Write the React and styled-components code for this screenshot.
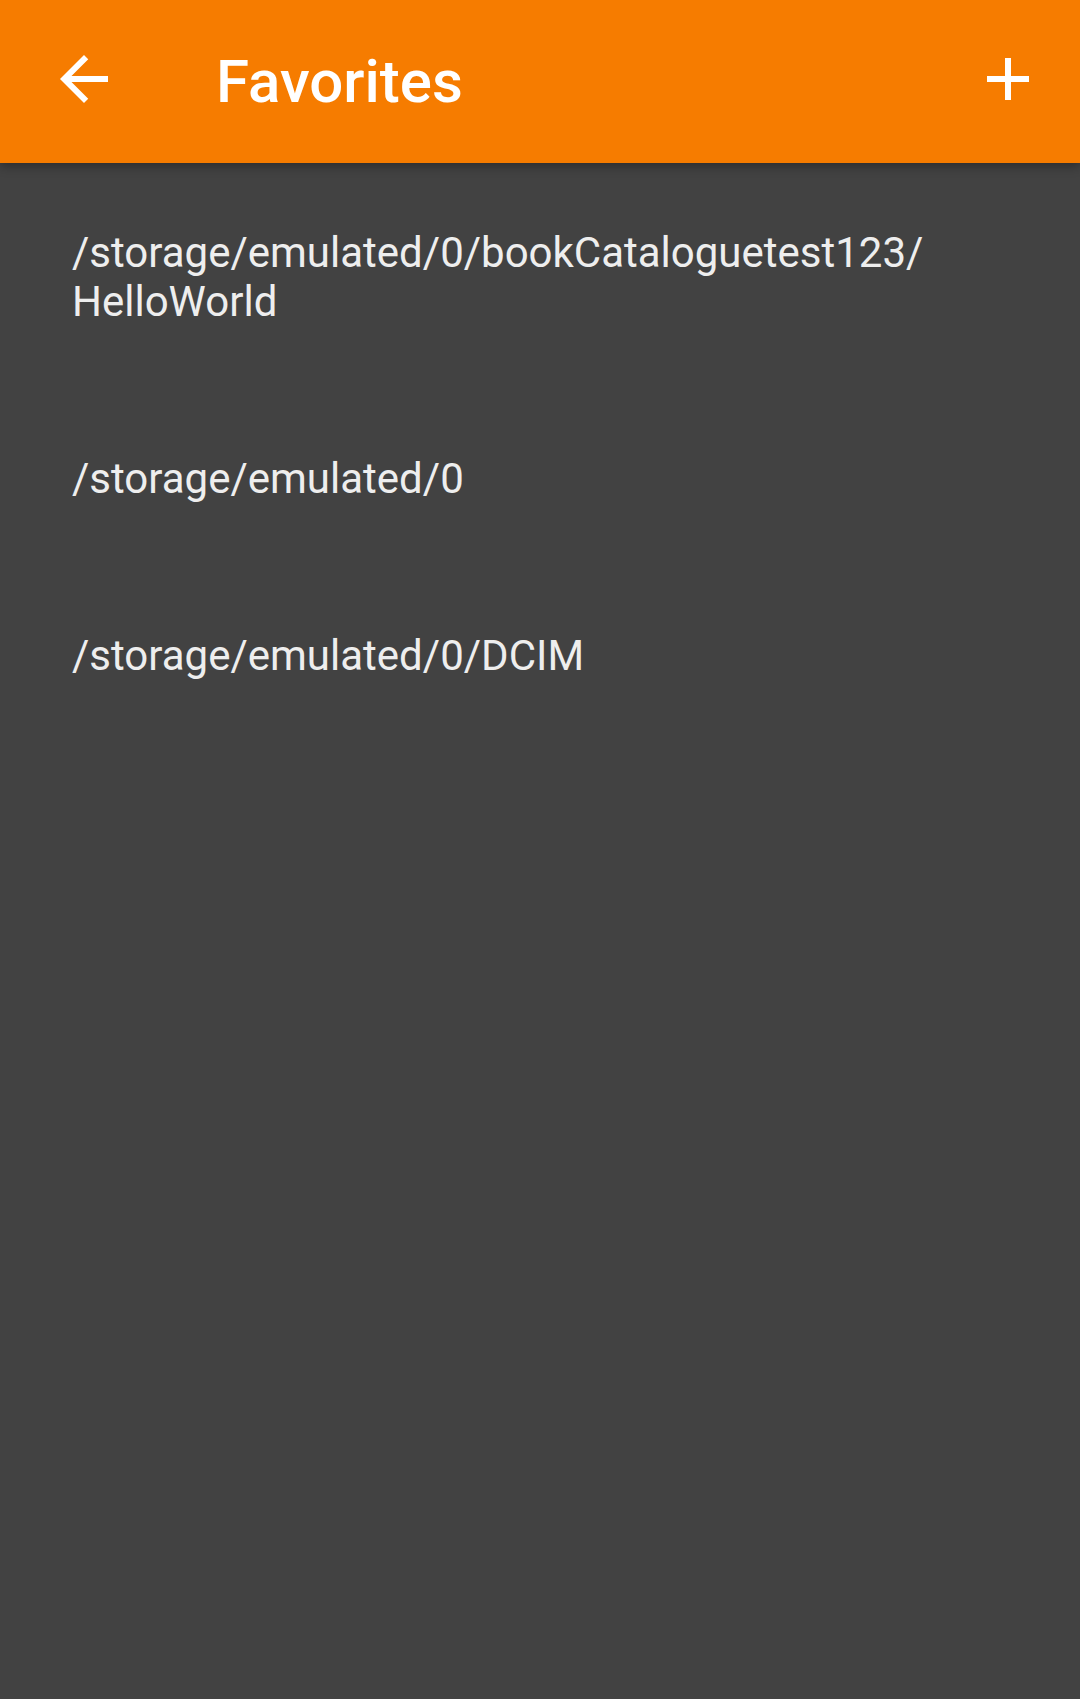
import React from "react";
import styled, { createGlobalStyle } from "styled-components";

const GlobalStyle = createGlobalStyle`
  html, body {
    margin: 0;
    padding: 0;
    background: #424242;
  }
  body {
    font-family: Roboto, "Noto Sans", "Liberation Sans", sans-serif;
  }
`;

const Screen = styled.div`
  min-height: 1699px;
  background: #424242;
  display: flex;
  flex-direction: column;
`;

// orange app bar with back arrow, title and add action
const AppBar = styled.header`
  position: relative;
  z-index: 1;
  height: 163px;
  box-sizing: border-box;
  padding-bottom: 5px;
  background: #f67c00;
  display: flex;
  align-items: center;
  box-shadow: 0 3px 10px rgba(0, 0, 0, 0.35);
`;

const IconButton = styled.button`
  width: ${props => props.$width}px;
  height: 72px;
  padding: 0;
  border: 0;
  background: transparent;
  display: flex;
  align-items: center;
  justify-content: center;
  cursor: pointer;
  flex-shrink: 0;

  svg {
    width: 72px;
    height: 72px;
    fill: #ffffff;
  }
`;

const Title = styled.h1`
  flex: 1;
  margin: 0 0 0 48px;
  padding-top: 4px;
  color: #ffffff;
  font-size: 60px;
  font-weight: 500;
  line-height: normal;
`;

const List = styled.ul`
  list-style: none;
  margin: 0;
  padding: 0;
`;

const Item = styled.li`
  padding: 65px 72px 63px;
  color: #eeeeee;
  font-size: 42px;
  line-height: normal;
`;

const favorites = [
  "/storage/emulated/0/bookCataloguetest123/HelloWorld",
  "/storage/emulated/0",
  "/storage/emulated/0/DCIM",
];

// allow the path to break after a slash, as Android does
const splitPath = path =>
  path.split("/").map((part, i, arr) => (
    <React.Fragment key={i}>
      {part}
      {i < arr.length - 1 && (
        <>
          /<wbr />
        </>
      )}
    </React.Fragment>
  ));

export default function App() {
  return (
    <Screen>
      <GlobalStyle />
      <AppBar>
        <IconButton $width={168} aria-label="Back">
          <svg viewBox="0 0 24 24">
            <path d="M20 11H7.83l5.59-5.59L12 4l-8 8 8 8 1.41-1.41L7.83 13H20v-2z" />
          </svg>
        </IconButton>
        <Title>Favorites</Title>
        <IconButton $width={144} aria-label="Add">
          <svg viewBox="0 0 24 24">
            <path d="M19 13h-6v6h-2v-6H5v-2h6V5h2v6h6v2z" />
          </svg>
        </IconButton>
      </AppBar>
      <List>
        {favorites.map(path => (
          <Item key={path}>{splitPath(path)}</Item>
        ))}
      </List>
    </Screen>
  );
}
